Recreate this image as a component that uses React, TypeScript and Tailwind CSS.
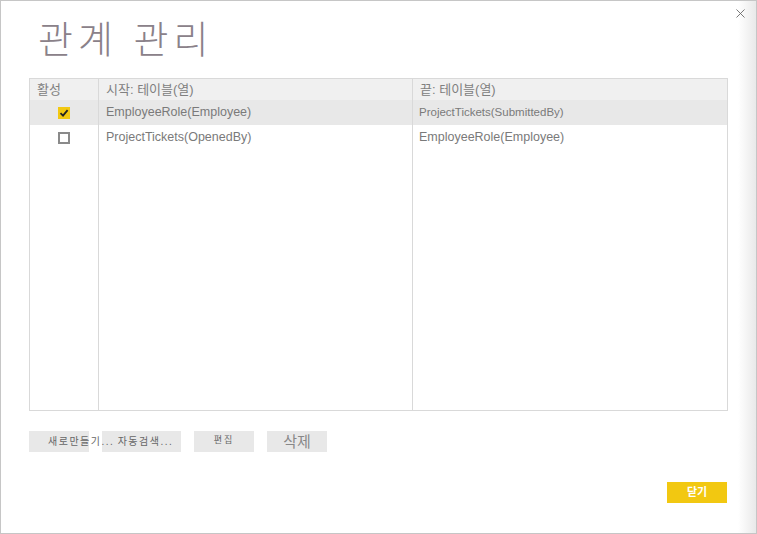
import { X } from 'lucide-react';

const cols = 'grid grid-cols-[69px_314px_1fr]';
const font = { fontFamily: '"Liberation Sans", "Noto Sans CJK KR", sans-serif' };

function CheckBox({ checked }: { checked: boolean }) {
  if (checked) {
    return (
      <span className="flex h-[12px] w-[12px] items-center justify-center bg-[#f2c811]">
        <svg width="10" height="10" viewBox="0 0 10 10">
          <path d="M1.5 5.2 L4 7.6 L8.6 2.2" stroke="#222" strokeWidth="1.8" fill="none" />
        </svg>
      </span>
    );
  }
  return <span className="block h-[12px] w-[12px] border-2 border-[#8a8a8a] bg-white" />;
}

export default function App() {
  const rows = [
    { active: true, from: 'EmployeeRole(Employee)', to: 'ProjectTickets(SubmittedBy)', small: true },
    { active: false, from: 'ProjectTickets(OpenedBy)', to: 'EmployeeRole(Employee)', small: false },
  ];

  return (
    <div
      className="relative flex h-[534px] w-[757px] flex-col overflow-hidden border border-[#c6c6c6] bg-white"
      style={font}
    >
      <div className="pointer-events-none absolute right-0 top-0 h-full w-[18px] bg-gradient-to-r from-white to-[#e9e9e9]" />
      <button className="absolute right-[8px] top-[5px] text-[#666]">
        <X size={15} strokeWidth={1.4} />
      </button>

      <h1 className="ml-[37px] mt-[14px] h-[50px] text-[38px] font-light leading-[50px] tracking-[5px] text-[#8a8189]">
        관계 관리
      </h1>

      <div className="ml-[28px] mt-[13px] flex h-[333px] w-[699px] flex-col border border-[#d9d9d9] text-[#7a7a7a]">
        <div className={`${cols} h-[21px] bg-[#f0f0f0] text-[13px] leading-[21px] text-[#808080]`}>
          <div className="border-r border-[#d9d9d9] pl-[7px]">활성</div>
          <div className="border-r border-[#d9d9d9] pl-[7px]">시작: 테이블(열)</div>
          <div className="pl-[7px]">끝: 테이블(열)</div>
        </div>
        {rows.map((r, i) => (
          <div key={i} className={`${cols} h-[25px] ${r.active ? 'bg-[#e8e8e8]' : 'bg-white'}`}>
            <div className="flex items-center justify-center border-r border-[#d9d9d9] pr-[1px]">
              <CheckBox checked={r.active} />
            </div>
            <div className="flex items-center border-r border-[#d9d9d9] pl-[7px] text-[12.5px]">{r.from}</div>
            <div className={`flex items-center pl-[6px] ${r.small ? 'text-[11.5px]' : 'text-[12.5px]'}`}>{r.to}</div>
          </div>
        ))}
        <div className={`${cols} flex-1`}>
          <div className="border-r border-[#d9d9d9]" />
          <div className="border-r border-[#d9d9d9]" />
          <div />
        </div>
      </div>

      <div className="ml-[28px] mt-[20px] flex h-[21px] gap-[13px] text-[#666]">
        <div className="relative h-[21px] w-[60px] bg-[#e8e8e8]">
          <span className="absolute left-[19px] top-0 whitespace-nowrap text-[10px] leading-[21px] tracking-[1.5px]">
            새로만들기...
          </span>
        </div>
        <button className="h-[21px] w-[79px] bg-[#e8e8e8] pl-[8px] text-[10px] leading-[21px] tracking-[1.5px]">
          자동검색...
        </button>
        <button className="h-[21px] w-[60px] bg-[#e8e8e8] pb-[2px] text-[9px] leading-[19px] tracking-[2px]">
          편집
        </button>
        <button className="h-[21px] w-[60px] bg-[#e8e8e8] text-[15px] leading-[21px] text-[#888]">
          삭제
        </button>
      </div>

      <div className="mr-[29px] mt-[30px] flex justify-end">
        <button className="h-[21px] w-[60px] bg-[#f2c811] text-[11px] font-bold leading-[21px] text-white">
          닫기
        </button>
      </div>
    </div>
  );
}
